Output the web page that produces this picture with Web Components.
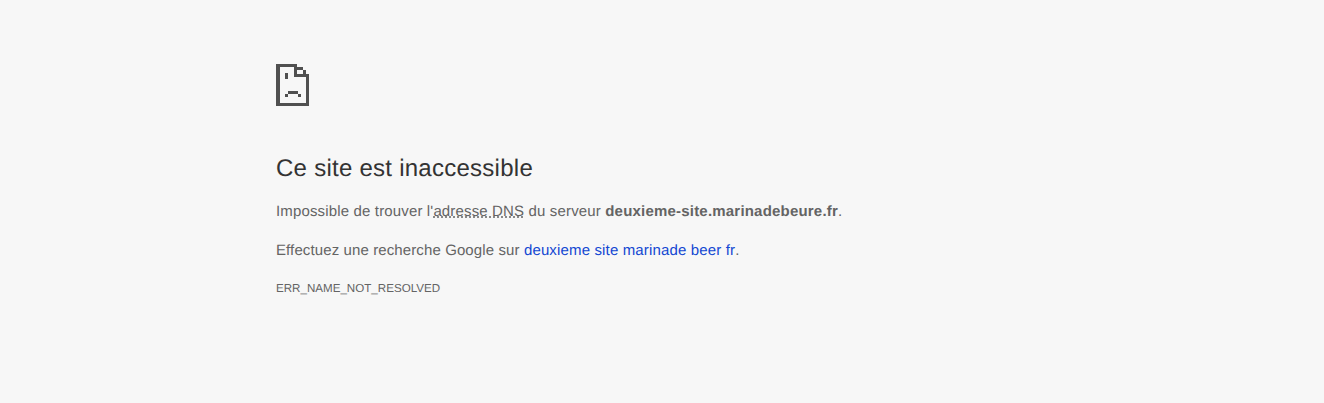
<!DOCTYPE html>
<html lang="fr">
<head>
<meta charset="utf-8">
<title>deuxieme-site.marinadebeure.fr</title>
<style>
    html, body { margin: 0; padding: 0; background: #f7f7f7; }
    b { letter-spacing: .2px; }
    .search { letter-spacing: .11px; }
</style>
</head>
<body>
<error-page>
    <sad-tab-icon slot="icon"></sad-tab-icon>
    <span slot="title">Ce site est inaccessible</span>
    <error-line>Impossible de trouver l'<dotted-abbr>adresse DNS</dotted-abbr> du serveur <b>deuxieme-site.marinadebeure.fr</b>.</error-line>
    <error-line class="search">Effectuez une recherche Google sur <search-link>deuxieme site marinade beer fr</search-link>.</error-line>
    <span slot="code">ERR_NAME_NOT_RESOLVED</span>
</error-page>

<script>
class ErrorPage extends HTMLElement {
    constructor() {
        super();
        this.attachShadow({ mode: "open" }).innerHTML = `
        <style>
            :host {
                display: block;
                box-sizing: border-box;
                width: 772px;
                margin: 0 auto;
                padding-top: 64px;
                height: 403px;
                font-family: "Liberation Sans", Arial, sans-serif;
                font-size: 15px;
                letter-spacing: .15px;
                text-rendering: geometricPrecision;
                color: #646464;
            }
            .icon { height: 42px; margin-bottom: 49px; }
            h1 {
                margin: 0 0 19px;
                font-size: 24px;
                font-weight: 400;
                letter-spacing: .26px;
                line-height: 28px;
                color: #333;
            }
            .code {
                margin-top: 20px;
                font-size: 11.6px;
                letter-spacing: 0;
                line-height: 16px;
            }
        </style>
        <div class="icon"><slot name="icon"></slot></div>
        <h1><slot name="title"></slot></h1>
        <slot></slot>
        <div class="code"><slot name="code"></slot></div>
        `;
    }
}

class SadTabIcon extends HTMLElement {
    constructor() {
        super();
        this.attachShadow({ mode: "open" }).innerHTML = `
        <style>
            :host { display: block; width: 33px; height: 42px; }
            svg { display: block; }
        </style>
        <svg width="33" height="42" viewBox="0 0 33 42" fill="#505050" shape-rendering="crispEdges">
            <rect x="0" y="0" width="21" height="3"/>
            <rect x="0" y="0" width="4" height="42"/>
            <rect x="0" y="39" width="33" height="3"/>
            <rect x="30" y="12" width="3" height="30"/>
            <rect x="18" y="0" width="3" height="13"/>
            <rect x="18" y="10" width="15" height="3"/>
            <rect x="21" y="3" width="6" height="3"/>
            <rect x="27" y="6" width="3" height="4"/>
            <rect x="9" y="9" width="3" height="6"/>
            <rect x="12" y="27" width="10" height="3"/>
            <rect x="9" y="30" width="3" height="3"/>
            <rect x="22" y="30" width="3" height="3"/>
        </svg>
        `;
    }
}

class ErrorLine extends HTMLElement {
    constructor() {
        super();
        this.attachShadow({ mode: "open" }).innerHTML = `<style>
            :host { display: block; line-height: 20px; margin-bottom: 19px; }
        </style><slot></slot>`;
    }
}

class DottedAbbr extends HTMLElement {
    constructor() {
        super();
        this.attachShadow({ mode: "open" }).innerHTML = `<style>
            :host { text-decoration: underline dotted; }
        </style><slot></slot>`;
    }
}

class SearchLink extends HTMLElement {
    constructor() {
        super();
        this.attachShadow({ mode: "open" }).innerHTML = `<style>
            :host { color: #1347d2; cursor: pointer; letter-spacing: .15px; }
        </style><slot></slot>`;
    }
}

customElements.define("error-page", ErrorPage);
customElements.define("sad-tab-icon", SadTabIcon);
customElements.define("error-line", ErrorLine);
customElements.define("dotted-abbr", DottedAbbr);
customElements.define("search-link", SearchLink);
</script>
</body>
</html>
